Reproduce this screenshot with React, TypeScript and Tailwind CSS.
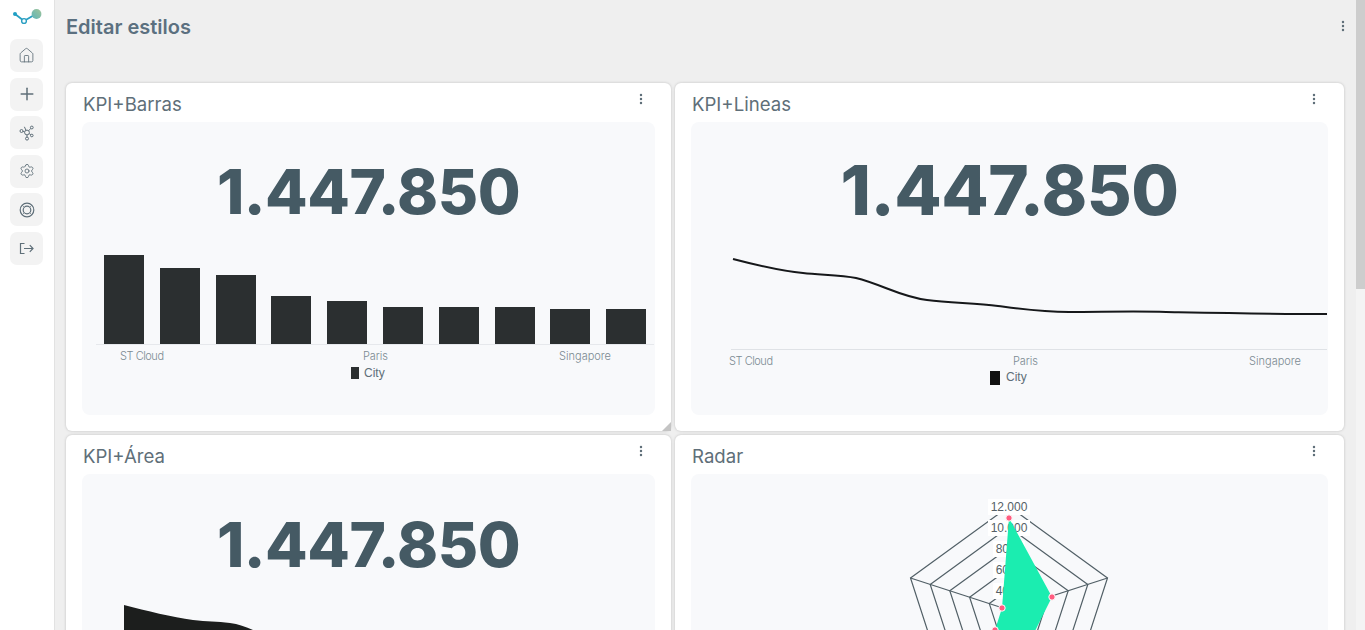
import React from 'react';
import { Home, Plus, Settings, MoreVertical } from 'lucide-react';

const font = { fontFamily: 'Inter, "Open Sans", sans-serif' };

const bars = [
  { x: 22, top: 133 },
  { x: 78, top: 146 },
  { x: 134, top: 153 },
  { x: 189, top: 174 },
  { x: 245, top: 179 },
  { x: 301, top: 185 },
  { x: 357, top: 185 },
  { x: 413, top: 185 },
  { x: 468, top: 187 },
  { x: 524, top: 187 },
];

const Logo = () => (
  <svg width="30" height="16" viewBox="0 0 30 16" fill="none">
    <defs>
      <linearGradient id="logoDot" x1="0" x2="1" y1="1" y2="0">
        <stop offset="0" stopColor="#5fb5b8" />
        <stop offset="1" stopColor="#a0c49a" />
      </linearGradient>
    </defs>
    <path d="M3 5 L12 12 L24 5" stroke="#2a9fc2" strokeWidth="1.8" />
    <circle cx="3" cy="5" r="2" fill="#1f9fc4" />
    <circle cx="12" cy="12" r="2.4" fill="#f8fcfd" stroke="#2a9fc2" strokeWidth="1.4" />
    <circle cx="24.5" cy="5" r="4.9" fill="url(#logoDot)" />
  </svg>
);

const NetworkIcon = () => (
  <svg width="16" height="16" viewBox="0 0 16 16" fill="none" stroke="#5f6f79" strokeWidth="1">
    <circle cx="8" cy="7.5" r="2.4" />
    <circle cx="2.5" cy="6" r="1.5" />
    <circle cx="12.8" cy="2.5" r="1.4" />
    <circle cx="12.8" cy="10.5" r="1.3" />
    <circle cx="8" cy="13.6" r="1.5" />
    <path d="M4 6.4 5.7 7M9.6 5.7l2.2-2.2M10.2 8.6l1.6 1.1M8 9.9v2.2M5.4 1.8l1.6 3.6" />
  </svg>
);

const RingIcon = () => (
  <svg width="16" height="16" viewBox="0 0 16 16" fill="none" stroke="#5f6f79" strokeWidth="1.2">
    <circle cx="8" cy="8" r="6.8" />
    <circle cx="8" cy="8" r="3.8" />
    <path d="M5.3 5.3 3.2 3.2M10.7 5.3l2.1-2.1M5.3 10.7l-2.1 2.1M10.7 10.7l2.1 2.1" strokeWidth="0.7" />
  </svg>
);

const ExitIcon = () => (
  <svg width="15" height="15" viewBox="0 0 15 15" fill="none" stroke="#5f6f79" strokeWidth="1.2">
    <path d="M5.5 2.5H1.5V12.5H5.5" />
    <path d="M5 7.5H14M10.8 4.2 14 7.5 10.8 10.8" />
  </svg>
);

const SideButton = ({ children }: { children: React.ReactNode }) => (
  <div className="flex h-[33px] w-[33px] items-center justify-center rounded-[7px] bg-[#f3f3f3] text-[#5f6f79]">
    {children}
  </div>
);

const Card = ({
  title,
  resizable,
  children,
}: {
  title: string;
  resizable?: boolean;
  children: React.ReactNode;
}) => (
  <div className="relative h-[348px] rounded-md bg-white shadow-[0_0_3px_rgba(0,0,0,0.2)]">
    <div className="flex h-[39px] items-start justify-between pl-[17px] pr-[23px] pt-[9px]">
      <span className="text-[18.6px] leading-[24px] text-[#5f6f79]" style={font}>
        {title}
      </span>
      <MoreVertical size={14} strokeWidth={2.2} className="text-[#5f6f79]" />
    </div>
    <div className="mx-4 h-[293px] overflow-hidden rounded-lg bg-[#f8f9fb]">{children}</div>
    {resizable && (
      <svg width="9" height="9" className="absolute bottom-0 right-0">
        <polygon points="9,0 9,9 0,9" fill="#c4c4c4" />
      </svg>
    )}
  </div>
);

const Kpi = ({ big, area }: { big?: boolean; area?: boolean }) => (
  <div
    className={`text-center font-extrabold leading-none text-[#455a64] ${
      big ? 'pt-[34px] text-[69px] tracking-[-0.5px]' : 'text-[62px] tracking-[-0.5px]'
    } ${area ? 'h-[131px] pt-[40px]' : 'h-[128px]'} ${big || area ? '' : 'pt-[39px]'}`}
    style={font}
  >
    1.447.850
  </div>
);

const BarChart = () => (
  <svg width="573" height="165" viewBox="0 128 573 165" className="block">
    {bars.map((b) => (
      <rect key={b.x} x={b.x} y={b.top} width="40" height={222 - b.top} fill="#2b2f30" />
    ))}
    <line x1="14" x2="572" y1="222.5" y2="222.5" stroke="#e6e8ec" />
    <g fill="#7b8a92" fontSize="11" fontFamily="Inter, sans-serif" fontWeight="300">
      <text x="38" y="238" textLength="44">ST Cloud</text>
      <text x="281" y="238" textLength="25">Paris</text>
      <text x="477" y="238" textLength="52">Singapore</text>
    </g>
    <rect x="269" y="245" width="8" height="12" fill="#2b2f30" />
    <text x="282" y="255" fontSize="12" fill="#5f6f79" fontFamily="Liberation Sans, sans-serif">City</text>
  </svg>
);

const LineChart = () => (
  <svg width="637" height="165" viewBox="0 128 637 165" className="block">
    <path
      d="M42 137 C65 143 88 149 112 151 C130 153 150 153 165 156 C190 162 210 175 236 178 C260 181 285 181 307 184 C330 187 350 190 378 190 C410 190 445 189 475 190 C530 191 580 192 636 192"
      fill="none"
      stroke="#16181a"
      strokeWidth="2"
    />
    <line x1="40" x2="636" y1="227.5" y2="227.5" stroke="#dfe2e6" />
    <g fill="#7b8a92" fontSize="11" fontFamily="Inter, sans-serif" fontWeight="300">
      <text x="38" y="243" textLength="44">ST Cloud</text>
      <text x="322" y="243" textLength="25">Paris</text>
      <text x="558" y="243" textLength="52">Singapore</text>
    </g>
    <rect x="299" y="249" width="10" height="14" fill="#111" />
    <text x="315" y="259" fontSize="12" fill="#5f6f79" fontFamily="Liberation Sans, sans-serif">City</text>
  </svg>
);

const AreaChart = () => (
  <svg width="573" height="40" className="block">
    <path
      d="M42 0 C65 6 90 12 111 15 C125 16.5 135 16.5 148 18 C156 19 164 22 171 25 L171 40 L42 40 Z"
      fill="#1c1e1d"
    />
  </svg>
);

// centro del radar dentro del panel
const cx = 318;
const cy = 136;
const pentagon = (r: number) =>
  [0, 1, 2, 3, 4]
    .map((i) => {
      const a = (-90 + i * 72) * (Math.PI / 180);
      return `${(cx + r * Math.cos(a)).toFixed(1)},${(cy + r * Math.sin(a)).toFixed(1)}`;
    })
    .join(' ');

const radarLabels = [
  { text: '12.000', w: 42 },
  { text: '10.000', w: 42 },
  { text: '8000', w: 32 },
  { text: '6000', w: 32 },
  { text: '4000', w: 32 },
];

const RadarChart = () => (
  <svg width="637" height="293" className="block">
    {[103.6, 82.9, 62.2, 41.4, 20.7].map((r) => (
      <polygon key={r} points={pentagon(r)} fill="none" stroke="#515f66" strokeWidth="1.2" />
    ))}
    {[0, 1, 2, 3, 4].map((i) => {
      const a = (-90 + i * 72) * (Math.PI / 180);
      return (
        <line
          key={i}
          x1={cx}
          y1={cy}
          x2={cx + 103.6 * Math.cos(a)}
          y2={cy + 103.6 * Math.sin(a)}
          stroke="#515f66"
          strokeWidth="1.2"
        />
      );
    })}
    {radarLabels.map((l, i) => (
      <g key={l.text}>
        <rect x={cx - l.w / 2} y={25 + i * 21} width={l.w} height="16" fill="#fff" />
        <text
          x={cx}
          y={37 + i * 21}
          textAnchor="middle"
          fontSize="12"
          fill="#555f66"
          fontFamily="Liberation Sans, sans-serif"
        >
          {l.text}
        </text>
      </g>
    ))}
    <polygon points="318,44 361,123 335,175 304,175 304,156 311,134" fill="#1bedb0" />
    {[
      [318, 44],
      [361, 123],
      [311, 134],
      [304, 156],
    ].map(([x, y]) => (
      <circle key={x} cx={x} cy={y} r="3.2" fill="#ff5c80" stroke="#fff" strokeWidth="1" />
    ))}
  </svg>
);

export default function App() {
  return (
    <div className="flex h-[630px] overflow-hidden bg-[#efefef]" style={font}>
      <aside className="flex w-[55px] shrink-0 flex-col items-start gap-[5.5px] border-r border-[#e2e2e2] bg-white pl-[10px] pt-[9px]">
        <div className="mb-[8.5px] ml-[2px] flex h-4 items-center">
          <Logo />
        </div>
        <SideButton>
          <Home size={17} strokeWidth={1.2} />
        </SideButton>
        <SideButton>
          <Plus size={20} strokeWidth={1.8} />
        </SideButton>
        <SideButton>
          <NetworkIcon />
        </SideButton>
        <SideButton>
          <Settings size={16} strokeWidth={1.3} />
        </SideButton>
        <SideButton>
          <RingIcon />
        </SideButton>
        <SideButton>
          <ExitIcon />
        </SideButton>
      </aside>

      <main className="min-w-0 flex-1 pl-[11px]">
        <header className="flex h-[83px] items-start justify-between pr-[6px] pt-[14px]">
          <h1 className="text-[20px] font-semibold leading-[26px] text-[#5b7080]">Editar estilos</h1>
          <MoreVertical size={14} strokeWidth={2.2} className="mt-[5px] text-[#5f6f79]" />
        </header>
        <div className="grid w-[1278px] grid-cols-[605px_669px] gap-1">
          <Card title="KPI+Barras" resizable>
            <Kpi />
            <BarChart />
          </Card>
          <Card title="KPI+Lineas">
            <Kpi big />
            <LineChart />
          </Card>
          <Card title="KPI+Área">
            <Kpi area />
            <AreaChart />
          </Card>
          <Card title="Radar">
            <RadarChart />
          </Card>
        </div>
      </main>

      <div className="flex w-[9px] shrink-0 flex-col bg-[#f4f4f4]">
        <div className="h-[289px] bg-[#cdcdcd]" />
      </div>
    </div>
  );
}
